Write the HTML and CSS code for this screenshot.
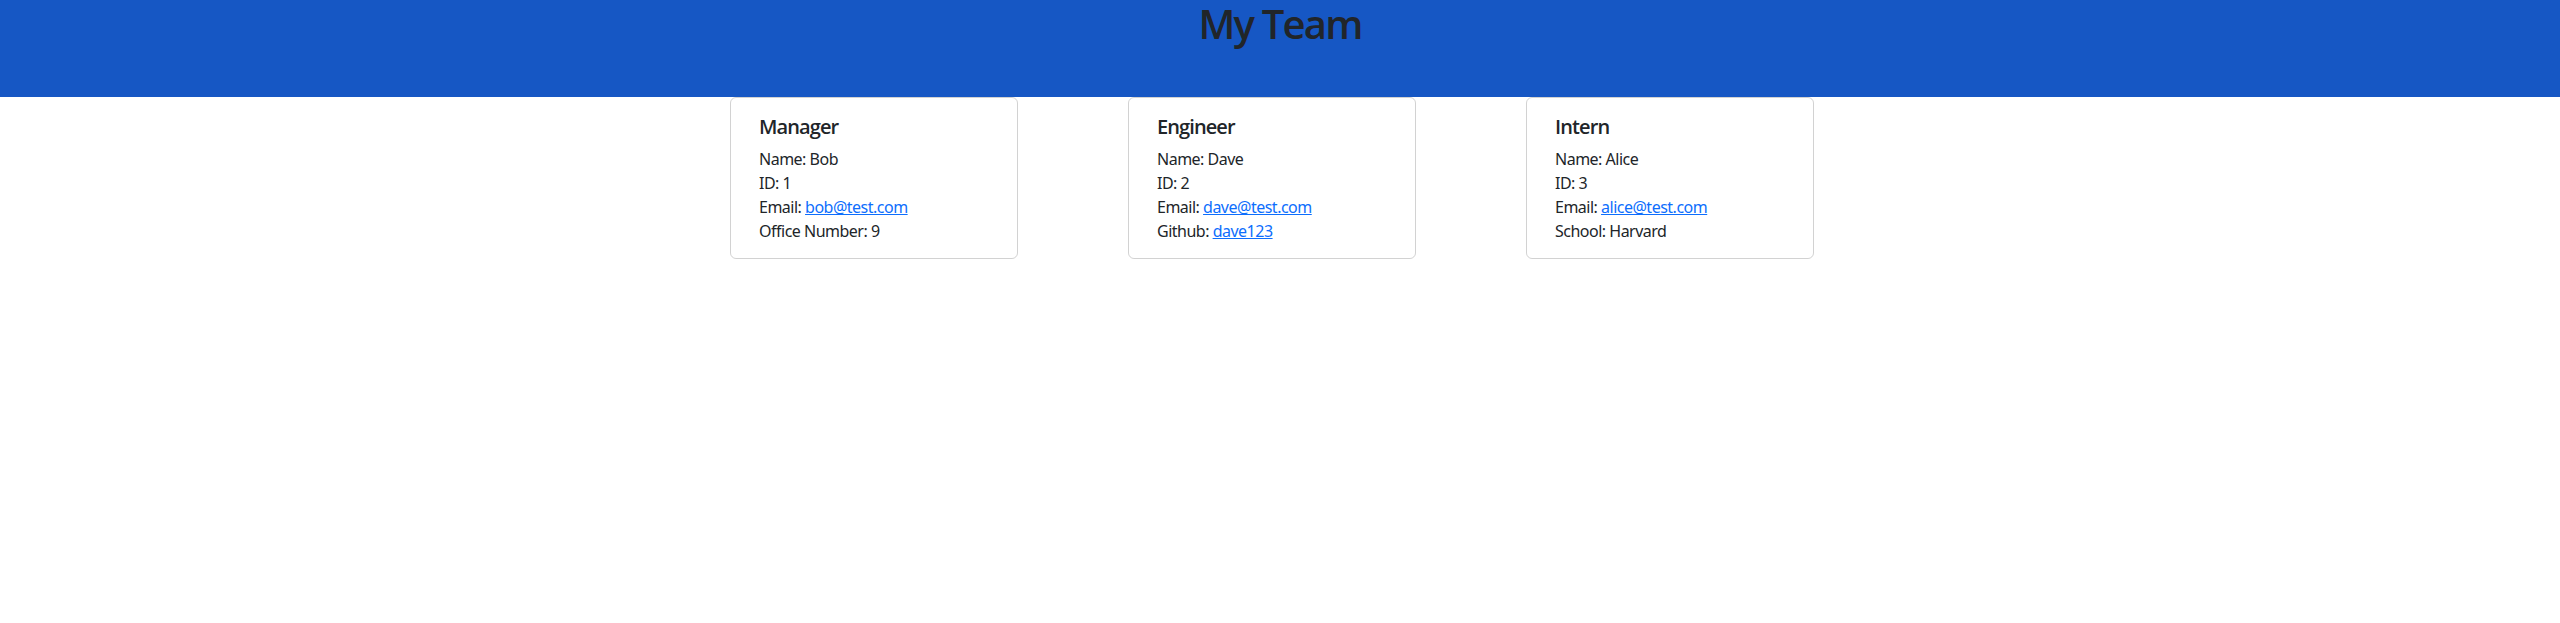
FILE: index.html
```html
<!DOCTYPE html>
<html lang="en">
<head>
<meta charset="utf-8">
<title>My Team</title>
<link rel="stylesheet" href="styles.css">
</head>
<body>
<header class="banner">
  <h1 class="banner-title">My Team</h1>
</header>
<main class="team">
  <div class="card">
    <h5 class="card-title">Manager</h5>
    <p class="card-line">Name: Bob</p>
    <p class="card-line">ID: 1</p>
    <p class="card-line">Email: <a href="#">bob@test.com</a></p>
    <p class="card-line">Office Number: 9</p>
  </div>
  <div class="card">
    <h5 class="card-title">Engineer</h5>
    <p class="card-line">Name: Dave</p>
    <p class="card-line">ID: 2</p>
    <p class="card-line">Email: <a href="#">dave@test.com</a></p>
    <p class="card-line">Github: <a href="#">dave123</a></p>
  </div>
  <div class="card">
    <h5 class="card-title">Intern</h5>
    <p class="card-line">Name: Alice</p>
    <p class="card-line">ID: 3</p>
    <p class="card-line">Email: <a href="#">alice@test.com</a></p>
    <p class="card-line">School: Harvard</p>
  </div>
</main>
</body>
</html>
```
FILE: styles.css
```css
html, body { margin: 0; padding: 0; }
body {
  font-family: "Noto Sans", "Open Sans", sans-serif;
  font-size: 16px;
  line-height: 1.5;
  letter-spacing: -0.5px;
  color: #212529;
  background: #fff;
}
.banner {
  background: #1657c4;
  height: 97px;
  text-align: center;
}
.banner-title {
  margin: 0;
  font-family: "Open Sans", "Noto Sans", sans-serif;
  font-size: 40px;
  font-weight: 600;
  line-height: 1.2;
  letter-spacing: -1.8px;
}
.team {
  display: flex;
  justify-content: center;
  gap: 110px;
  padding-right: 16px;
}
.card {
  width: 288px;
  box-sizing: border-box;
  border: 1px solid rgba(0, 0, 0, .175);
  border-radius: 6px;
  padding: 17px 16px 15px 28px;
}
.card-title {
  margin: 0 0 8px;
  font-family: "Open Sans", "Noto Sans", sans-serif;
  font-size: 20px;
  font-weight: 600;
  line-height: 1.2;
  letter-spacing: -0.9px;
}
.card-line { margin: 0; }
.card-line a { color: #0d6efd; }
```
